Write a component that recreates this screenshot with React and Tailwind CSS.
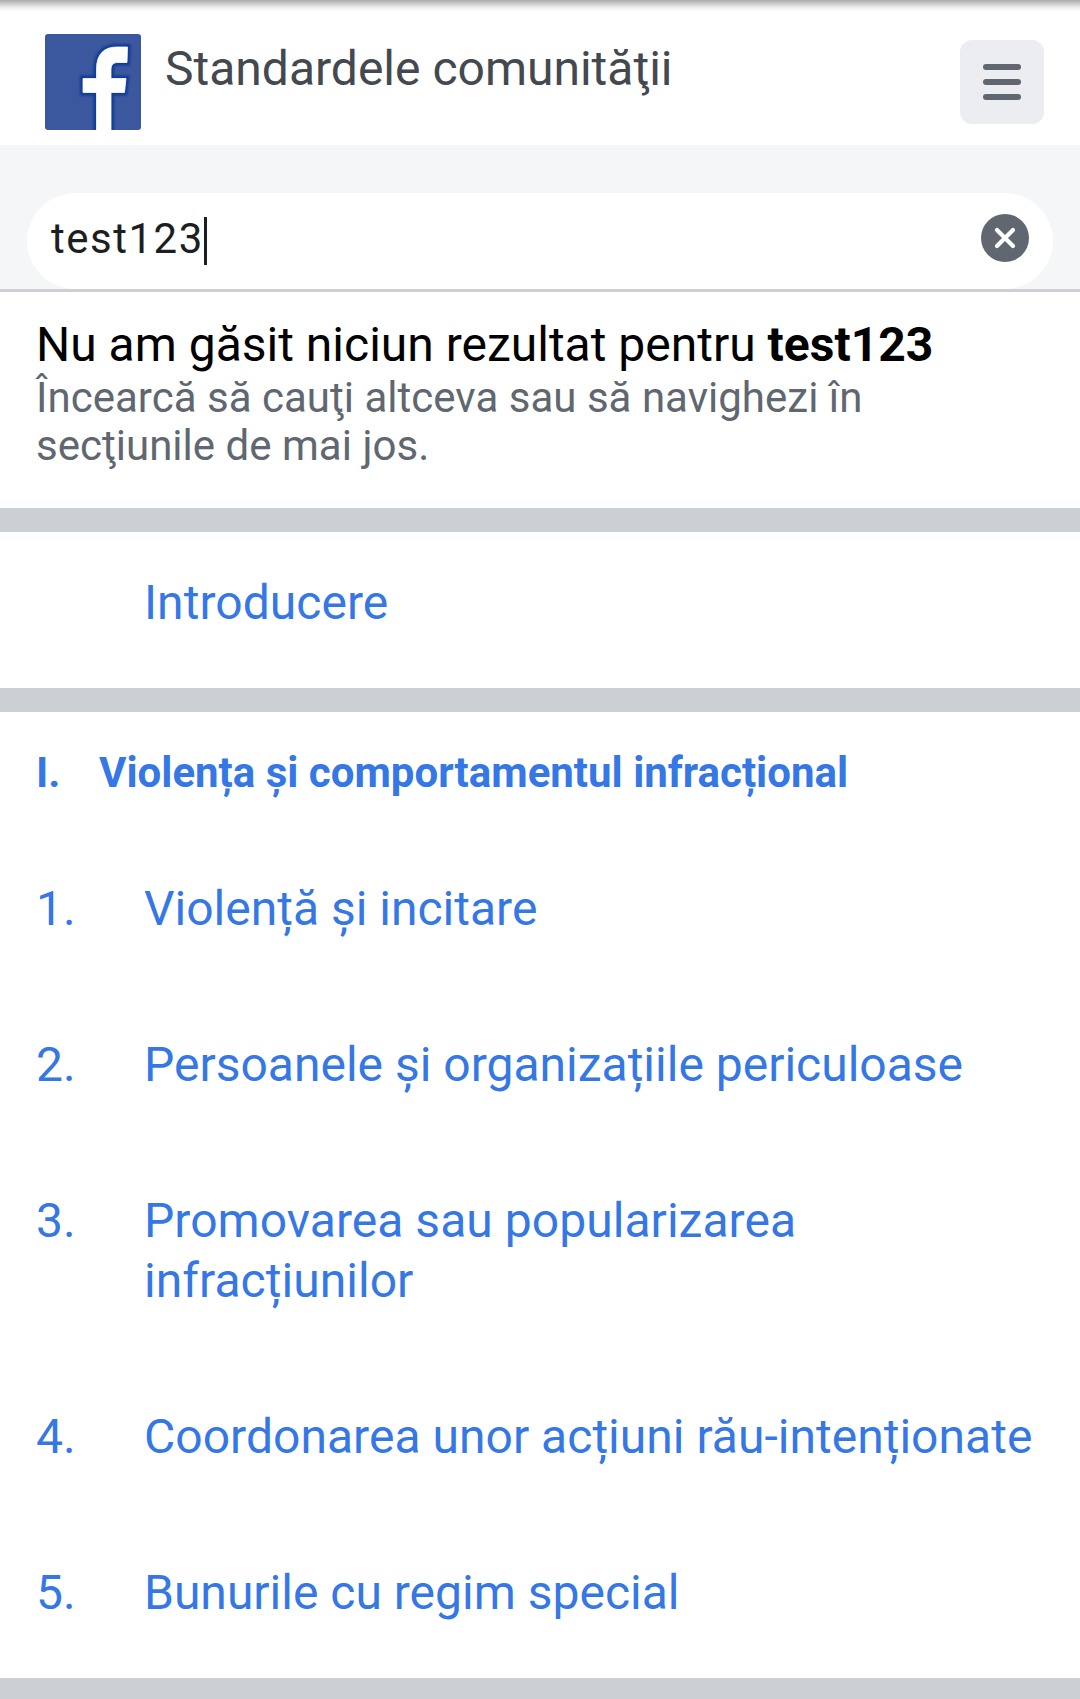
const items = [
  ["1.", "Violență și incitare", "h-[156px]", "tracking-normal"],
  ["2.", "Persoanele și organizațiile periculoase", "h-[156px]", "tracking-normal"],
  ["3.", "Promovarea sau popularizarea infracțiunilor", "h-[216px]", "tracking-[0.045px]"],
  ["4.", "Coordonarea unor acțiuni rău-intenționate", "h-[156px]", "tracking-[0.025px]"],
  ["5.", "Bunurile cu regim special", "h-[156px]", "tracking-normal"],
];

const logoPath = "M51.5 100V58.5H38V44.5H51.5V35C51.5 20 59 13 72 13H82.5L82 28.5H73C68 28.5 66 31 66 36V44.5H81L79.5 58.5H66V100Z";

function Header() {
  return (
    <header className="flex h-[145px] items-start justify-between bg-white bg-[linear-gradient(to_bottom,#acacac_0px,#bcbcbc_2px,#d8d8d8_5px,#f2f2f2_8px,#fcfcfc_11px,#ffffff_13px)] pl-[45px] pr-9">
      <div className="flex pt-[34px]">
        <svg className="size-24" viewBox="0 0 96 96">
          <rect width="96" height="96" rx="3" fill="#3b579d" />
          <path className="blur-[1px]" d={logoPath} fill="none" stroke="#00339a" strokeWidth="6" strokeOpacity="0.75" />
          <path className="blur-[0.7px]" d={logoPath} fill="#fff" stroke="#fff" strokeWidth="0.8" strokeLinejoin="round" />
        </svg>
        <h1 className="ml-6 mt-[6px] whitespace-nowrap text-[48px] leading-[58px] text-[#444950]">Standardele comunităţii</h1>
      </div>
      <button aria-label="Meniu" className="mt-10 flex size-[84px] flex-col items-center justify-center gap-[9px] rounded-xl bg-[#ebedf0]">
        <span className="h-1.5 w-[38px] rounded-full bg-[#606770]" />
        <span className="h-1.5 w-[38px] rounded-full bg-[#606770]" />
        <span className="h-1.5 w-[38px] rounded-full bg-[#606770]" />
      </button>
    </header>
  );
}

function Search() {
  return (
    <div className="h-[147px] border-b-[3px] border-[#ccd0d5] bg-[#f5f6f7] px-[27px] pt-12">
      <div className="flex h-24 items-center justify-between rounded-full bg-white pl-6 pr-6">
        <div className="flex items-center text-[42px] leading-[50px] tracking-[1.5px] text-[#1c1e21]">
          <span className="-mt-1">test123</span>
          <span className="h-12 w-[3px] bg-[#1c1e21]" />
        </div>
        <svg className="mb-1.5 size-12" viewBox="0 0 48 48">
          <circle cx="24" cy="24" r="24" fill="#606770" />
          <path d="M16 16L32 32M32 16L16 32" stroke="#fff" strokeWidth="4.2" strokeLinecap="round" />
        </svg>
      </div>
    </div>
  );
}

export default function App() {
  return (
    <div className="h-[1699px] w-[1080px] overflow-hidden bg-white font-['Roboto',sans-serif]">
      <Header />
      <Search />
      <section className="h-[216px] whitespace-nowrap pl-9 pt-6">
        <p className="text-[48px] leading-[58px] text-black">Nu am găsit niciun rezultat pentru <b>test123</b></p>
        <p className="text-[42px] leading-12 tracking-[0.02px] text-[#606770]">Încearcă să cauţi altceva sau să navighezi în<br />secţiunile de mai jos.</p>
      </section>
      <div className="h-6 bg-[#ccd0d5]" />
      <section className="h-[156px] pl-36 pt-[41px] text-[48px] leading-[60px] tracking-[0.05px] text-[#3578e5]">Introducere</section>
      <div className="h-6 bg-[#ccd0d5]" />
      <section className="h-[966px] text-[#3578e5]">
        <h2 className="flex h-[126px] pl-9 pt-9 text-[42px] font-bold leading-[50px]">
          <span className="w-[63px]">I.</span><span>Violența și comportamentul infracțional</span>
        </h2>
        {items.map(([n, label, height, tracking]) => (
          <div key={n} className={`flex ${height} pl-9 pt-[41px] text-[48px] leading-[60px]`}>
            <span className="w-[108px] shrink-0">{n}</span>
            <span className={`max-w-[900px] ${tracking}`}>{label}</span>
          </div>
        ))}
      </section>
      <div className="h-[21px] bg-[#ccd0d5]" />
    </div>
  );
}
